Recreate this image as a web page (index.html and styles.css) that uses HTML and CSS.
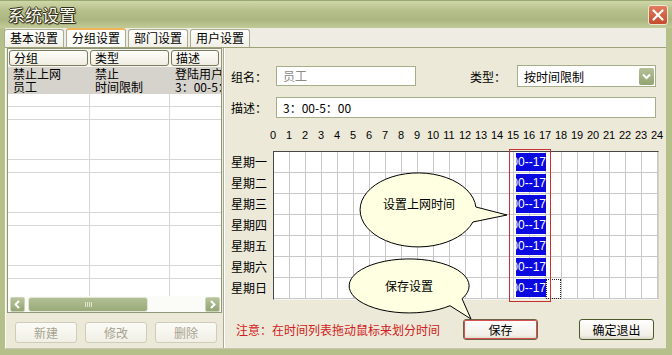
FILE: index.html
```html
<!DOCTYPE html>
<html lang="zh-CN">
<head>
  <meta charset="UTF-8" />
  <meta name="viewport" content="width=device-width, initial-scale=1.0"/>
  <title>系统设置</title>
  <link rel="stylesheet" href="styles.css">
</head>
<body>

<div class="window">
  <div class="titlebar">
    <span class="title">系统设置</span>
    <span class="close">
      <svg width="12" height="12" viewBox="0 0 12 12"><path d="M1.5 1.5 L10.5 10.5 M10.5 1.5 L1.5 10.5" stroke="#fff" stroke-width="2.2" stroke-linecap="round"/></svg>
    </span>
  </div>

  <div class="frame">
    <div class="tabs">
      <div class="tab">基本设置</div>
      <div class="tab active">分组设置</div>
      <div class="tab">部门设置</div>
      <div class="tab">用户设置</div>
    </div>

    <div class="pane">
      <div class="left">
        <div class="listbox">
          <div class="list-head">
            <div class="hcol c1">分组</div>
            <div class="hcol c2">类型</div>
            <div class="hcol c3">描述</div>
          </div>
          <div class="list-body">
            <div class="row">
              <span class="c1">禁止上网</span><span class="c2">禁止</span><span class="c3">登陆用户</span>
            </div>
            <div class="row tall">
              <span class="c1">员工</span><span class="c2">时间限制</span><span class="c3">3：00-5：</span>
            </div>
          </div>
          <div class="hscroll">
            <div class="sbtn">
              <svg width="9" height="9" viewBox="0 0 9 9"><path d="M6 1 L2.5 4.5 L6 8" fill="none" stroke="#fff" stroke-width="2"/></svg>
            </div>
            <div class="track">
              <div class="thumb"><span class="grip"></span></div>
            </div>
            <div class="sbtn">
              <svg width="9" height="9" viewBox="0 0 9 9"><path d="M3 1 L6.5 4.5 L3 8" fill="none" stroke="#fff" stroke-width="2"/></svg>
            </div>
          </div>
        </div>
        <div class="left-buttons">
          <div class="btn disabled">新建</div>
          <div class="btn disabled">修改</div>
          <div class="btn disabled">删除</div>
        </div>
      </div>

      <div class="right">
        <div class="field-row first">
          <span class="lbl">组名：</span>
          <div class="input name">员工</div>
          <span class="lbl type-lbl">类型：</span>
          <div class="select">
            <span class="sel-text">按时间限制</span>
            <span class="drop">
              <svg width="9" height="7" viewBox="0 0 9 7"><path d="M1 1.5 L4.5 5 L8 1.5" fill="none" stroke="#fff" stroke-width="2"/></svg>
            </span>
          </div>
        </div>
        <div class="field-row">
          <span class="lbl">描述：</span>
          <div class="input desc">3：00-5：00</div>
        </div>

        <div class="hours">
          <span>0</span><span>1</span><span>2</span><span>3</span><span>4</span><span>5</span><span>6</span><span>7</span><span>8</span><span>9</span><span>10</span><span>11</span><span>12</span><span>13</span><span>14</span><span>15</span><span>16</span><span>17</span><span>18</span><span>19</span><span>20</span><span>21</span><span>22</span><span>23</span><span>24</span>
        </div>

        <div class="schedule">
          <div class="days">
            <div>星期一</div>
            <div>星期二</div>
            <div>星期三</div>
            <div>星期四</div>
            <div>星期五</div>
            <div>星期六</div>
            <div>星期日</div>
          </div>
          <div class="grid">
            <div class="slot"><span>15:00--17</span></div>
            <div class="slot"><span>15:00--17</span></div>
            <div class="slot"><span>15:00--17</span></div>
            <div class="slot"><span>15:00--17</span></div>
            <div class="slot"><span>15:00--17</span></div>
            <div class="slot"><span>15:00--17</span></div>
            <div class="slot"><span>15:00--17</span></div>
            <div class="cursor-cell"></div>
            <div class="sel-frame"></div>
          </div>
        </div>

        <div class="bottom-row">
          <span class="note">注意：在时间列表拖动鼠标来划分时间</span>
          <div class="btn save">保存</div>
          <div class="btn">确定退出</div>
        </div>
      </div>
    </div>
  </div>
</div>

<!-- help bubbles drawn over the schedule -->
<svg class="callouts" width="672" height="355" viewBox="0 0 672 355">
  <path d="M475.9 207 L507 215 L472.9 222 A58 37 0 1 1 475.9 207 Z" fill="#ffffe1" stroke="#000" stroke-width="1"/>
  <text x="419" y="209" text-anchor="middle">设置上网时间</text>
  <path d="M462 298.7 L471 319 L450 305.7 A60 27 0 1 1 462 298.7 Z" fill="#ffffe1" stroke="#000" stroke-width="1"/>
  <text x="409" y="291" text-anchor="middle">保存设置</text>
</svg>

</body>
</html>
```

FILE: styles.css
```css
* { box-sizing: border-box; }
body {
  margin: 0;
  font-family: "Noto Sans CJK SC", "Liberation Sans", sans-serif;
  font-size: 12px;
  color: #000;
  background: #ece9d8;
}
.window {
  width: 672px;
  height: 355px;
  display: flex;
  flex-direction: column;
}
.titlebar {
  height: 28px;
  display: flex;
  align-items: center;
  justify-content: space-between;
  padding: 0 4px 0 8px;
  background: linear-gradient(#cfd7a8, #b6c08b 35%, #abb781 70%, #c2cb98);
  border-top: 1px solid #9aa871;
}
.title {
  font-size: 17px;
  color: #fafaf0;
  text-shadow: 1px 0 0 #30301c, -1px 0 0 #30301c, 0 1px 0 #30301c, 0 -1px 0 #30301c, 1px 1px 1px #30301c;
  line-height: 20px;
}
.close {
  width: 20px;
  height: 20px;
  display: flex;
  align-items: center;
  justify-content: center;
  background: linear-gradient(#e27b5d, #c44b2d);
  border: 1px solid #f3e7d8;
  border-radius: 3px;
}
.frame {
  flex: 1;
  display: flex;
  flex-direction: column;
  border: 5px solid #b4bf89;
  border-top: none;
  border-right-width: 6px;
  border-bottom-width: 6px;
  background: #ece9d8;
}
.tabs {
  height: 20px;
  display: flex;
  align-items: flex-end;
  border-bottom: 1px solid #9ca276;
  background: #efede3;
}
.tab {
  height: 18px;
  line-height: 16px;
  padding: 0 5px;
  margin-right: 2px;
  border: 1px solid #a9ac8f;
  border-bottom: none;
  border-radius: 3px 3px 0 0;
  background: linear-gradient(#fefefd, #f1efe6);
}
.tab:first-child { margin-left: -1px; }
.tab.active {
  height: 19px;
  border-top: 2px solid #f0b45a;
  background: #fcfcfb;
}
.pane {
  flex: 1;
  display: flex;
  border-left: 1px solid #fbfbf7;
  border-bottom: 1px solid #c9c6b4;
}

/* left list */
.left {
  width: 218px;
  padding-left: 1px;
  border-right: 1px solid #aca899;
  box-shadow: 1px 0 0 #fff;
}
.listbox {
  width: 215px;
  height: 265px;
  border: 1px solid #8e9779;
  background: #fff;
  display: flex;
  flex-direction: column;
  overflow: hidden;
}
.list-head {
  height: 18px;
  display: flex;
  background: #f6f5ee;
}
.hcol {
  height: 16px;
  margin: 1px 0 1px 2px;
  padding-left: 4px;
  line-height: 14px;
  border: 1px solid #7b7a5c;
  border-radius: 3px;
  background: linear-gradient(#fefefa, #efede2);
}
.hcol.c1 { width: 79px; margin-left: 1px; }
.hcol.c2 { width: 79px; }
.hcol.c3 { width: 48px; }
.list-body {
  flex: 1;
  background:
    linear-gradient(to right, transparent 81px, #d6d6d6 81px, #d6d6d6 82px, transparent 82px, transparent 161px, #d6d6d6 161px, #d6d6d6 162px, transparent 162px),
    repeating-linear-gradient(to bottom, transparent 0, transparent 39px, #d6d6d6 39px, #d6d6d6 40px, transparent 40px, transparent 52px, #d6d6d6 52px, #d6d6d6 53px),
    #fff;
}
.row {
  height: 13px;
  display: flex;
  line-height: 13px;
  background: #d6d3cc;
}
.row.tall { height: 14px; }
.row span { padding-left: 5px; white-space: nowrap; }
.row .c1 { width: 82px; }
.row .c2 { width: 80px; }
.row .c3 { width: 51px; }
.hscroll {
  height: 16px;
  display: flex;
  align-items: center;
  padding: 0 1px 0 2px;
  background: #fbfbf7;
}
.sbtn {
  width: 15px;
  height: 15px;
  display: flex;
  align-items: center;
  justify-content: center;
  border: 1px solid #cdd3b8;
  border-radius: 2px;
  background: linear-gradient(#b7c39a, #94a573);
}
.track {
  flex: 1;
  height: 15px;
}
.thumb {
  width: 120px;
  height: 15px;
  margin-left: 3px;
  display: flex;
  align-items: center;
  justify-content: center;
  border: 1px solid #e2e6d2;
  border-radius: 3px;
  background: linear-gradient(#b1bf94, #9aab7a);
}
.grip {
  width: 7px;
  height: 5px;
  background: repeating-linear-gradient(to right, #dfe6cd 0, #dfe6cd 1px, transparent 1px, transparent 2px);
}
.left-buttons {
  display: flex;
  gap: 8px;
  padding: 9px 0 0 8px;
}
.btn {
  height: 21px;
  line-height: 19px;
  text-align: center;
  border: 1px solid #4b5a2b;
  border-radius: 3px;
  background: linear-gradient(#ffffff, #f1efe6 80%, #dcd9c9);
}
.left-buttons .btn { width: 62px; }
.btn.disabled {
  color: #a7a38f;
  border-color: #cfccba;
  background: linear-gradient(#fbfbf7, #f1efe5);
}

/* right form */
.right {
  flex: 1;
  padding-left: 6px;
  margin-left: 1px;
}
.field-row {
  display: flex;
  align-items: center;
  margin-top: 10px;
  height: 21px;
}
.field-row.first { margin-top: 17px; height: 22px; }
.lbl { width: 45px; }
.type-lbl { margin-left: 54px; width: 47px; }
.input {
  height: 20px;
  line-height: 18px;
  padding-left: 6px;
  border: 1px solid #a5ad89;
  background: #fff;
}
.input.name { width: 140px; color: #8a8a8a; }
.input.desc { width: 380px; height: 21px; line-height: 19px; }
.select {
  width: 139px;
  height: 22px;
  display: flex;
  align-items: center;
  justify-content: space-between;
  padding: 0 1px 0 6px;
  border: 1px solid #a5ad89;
  background: #fff;
}
.drop {
  width: 15px;
  height: 17px;
  display: flex;
  align-items: center;
  justify-content: center;
  border-radius: 2px;
  background: linear-gradient(#b4c197, #93a473);
}
.hours {
  display: flex;
  margin: 10px 0 0 34px;
  height: 14px;
  line-height: 14px;
  font-family: "Liberation Sans", sans-serif;
  font-size: 11px;
}
.hours span { width: 16px; text-align: center; }
.schedule {
  display: flex;
  margin-top: 9px;
}
.days { width: 42px; }
.days div { height: 21px; line-height: 21px; }
.grid {
  position: relative;
  display: grid;
  grid-template-columns: repeat(24, 16px);
  grid-template-rows: repeat(7, 21px);
  border: 1px solid;
  border-color: #474747 #d6d3c6 #f6f5ef #474747;
  background:
    linear-gradient(to left, #c8c8c8 1px, transparent 1px) 0 0 / 16px 21px,
    linear-gradient(to top, #c8c8c8 1px, transparent 1px) 0 0 / 16px 21px,
    #fff;
}
.slot {
  grid-column: 16 / span 2;
  margin: 1px 0 2px 2px;
  background: #0a0ae0;
  color: #fff;
  display: flex;
  justify-content: flex-end;
  align-items: center;
  overflow: hidden;
  font-family: "Liberation Sans", sans-serif;
  font-size: 12px;
  white-space: nowrap;
}
.cursor-cell {
  grid-column: 18;
  grid-row: 7;
  margin: 1px 1px 0 0;
  border: 1px dotted #222;
}
.sel-frame {
  position: absolute;
  left: 235px;
  top: -3px;
  width: 42px;
  height: 153px;
  border: 1px solid #c83030;
}
.bottom-row {
  display: flex;
  align-items: center;
  margin-top: 19px;
}
.note {
  width: 232px;
  padding-left: 5px;
  color: #d02020;
}
.bottom-row .btn { width: 75px; }
.btn.save {
  border-color: #6d6246;
  box-shadow: inset 0 0 0 1px #d65050;
  margin-right: 41px;
}

.callouts {
  position: absolute;
  top: 0;
  left: 0;
  pointer-events: none;
  font-family: "Noto Sans CJK SC", sans-serif;
  font-size: 12px;
}
```
